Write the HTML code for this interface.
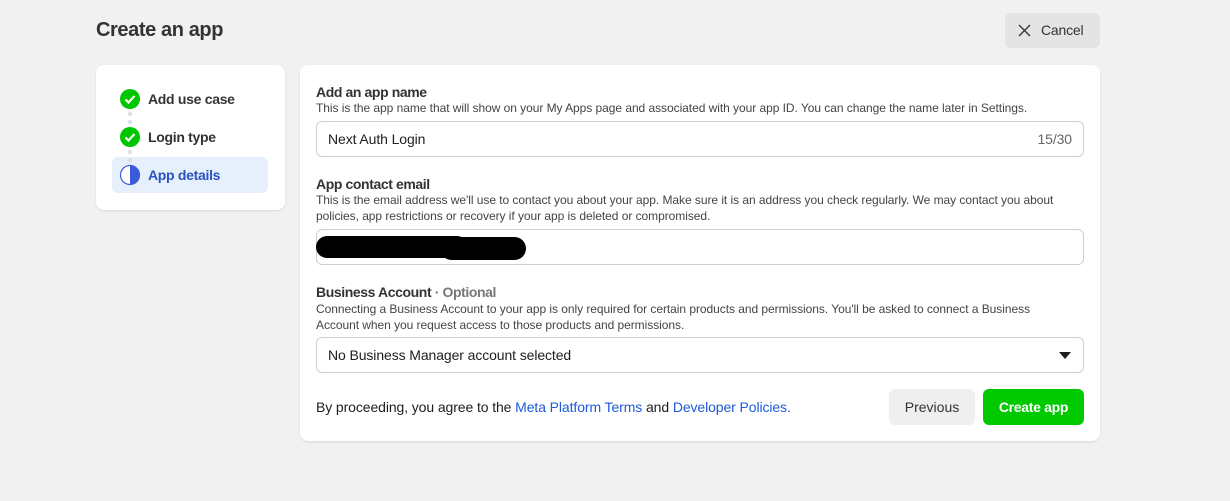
<!DOCTYPE html>
<html><head><style>
*{margin:0;padding:0;box-sizing:border-box}
body{width:1230px;height:501px;background:#f1f1f1;font-family:"Liberation Sans",Arial,sans-serif;color:#1c1e21;position:relative;overflow:hidden}
.a{position:absolute;white-space:nowrap}
.card{position:absolute;background:#fff;border-radius:8px;box-shadow:0 1px 2px rgba(0,0,0,.1)}
.h{font-size:14px;font-weight:bold;color:#333;letter-spacing:-0.4px}
.d{font-size:12px;color:#444;letter-spacing:-0.05px;line-height:16px}
.inp{position:absolute;left:316px;width:768px;height:36px;border:1px solid #ccd0d5;border-radius:6px;background:#fff}
.it{position:absolute;left:11px;top:9px;font-size:14px;color:#1c1e21;letter-spacing:-0.1px}
.chk{position:absolute;left:120px;width:20px;height:20px;border-radius:50%;background:#00c600}
.dot{position:absolute;left:128px;width:4px;height:4px;border-radius:50%;background:#dadde1}
.step{position:absolute;left:148px;font-size:14px;font-weight:bold;letter-spacing:-0.3px;color:#333}
</style></head><body>
<div class="a" style="left:96px;top:19px;font-size:20px;font-weight:bold;color:#333;letter-spacing:-0.4px">Create an app</div>
<div class="a" style="left:1005px;top:13px;width:95px;height:35px;background:#e4e4e4;border-radius:6px"></div>
<svg class="a" style="left:1018px;top:24px" width="13" height="13" viewBox="0 0 13 13"><path d="M1 1L12 12M12 1L1 12" stroke="#333" stroke-width="1.3"/></svg>
<div class="a" style="left:1041px;top:22px;font-size:14px;color:#333;letter-spacing:-0.2px">Cancel</div>

<div class="card" style="left:96px;top:65px;width:189px;height:145px"></div>
<div class="a" style="left:112px;top:157px;width:156px;height:36px;background:#e6f0fd;border-radius:6px"></div>
<div class="chk" style="top:89px"></div>
<svg class="a" style="left:120px;top:89px" width="20" height="20"><path d="M5.5 10.5l3 3 6-6.5" stroke="#fff" stroke-width="2.2" fill="none"/></svg>
<div class="step" style="top:91px">Add use case</div>
<div class="dot" style="top:112px"></div><div class="dot" style="top:120px"></div>
<div class="chk" style="top:127px"></div>
<svg class="a" style="left:120px;top:127px" width="20" height="20"><path d="M5.5 10.5l3 3 6-6.5" stroke="#fff" stroke-width="2.2" fill="none"/></svg>
<div class="step" style="top:129px">Login type</div>
<div class="dot" style="top:150px"></div><div class="dot" style="top:158px"></div>
<svg class="a" style="left:119px;top:164px" width="22" height="22"><circle cx="11" cy="11" r="9.5" fill="#fff" stroke="#3b5bdb" stroke-width="1.2"/><path d="M11 1.5A9.5 9.5 0 0 1 11 20.5Z" fill="#3b5bdb"/></svg>
<div class="step" style="top:167px;color:#2a52be">App details</div>

<div class="card" style="left:300px;top:65px;width:800px;height:376px"></div>
<div class="a h" style="left:316px;top:84px">Add an app name</div>
<div class="a d" style="left:316px;top:100px">This is the app name that will show on your My Apps page and associated with your app ID. You can change the name later in Settings.</div>
<div class="inp" style="top:121px"><div class="it">Next Auth Login</div><div class="it" style="left:auto;right:11px;color:#666">15/30</div></div>
<div class="a h" style="left:316px;top:176px">App contact email</div>
<div class="a d" style="left:316px;top:192px">This is the email address we'll use to contact you about your app. Make sure it is an address you check regularly. We may contact you about<br>policies, app restrictions or recovery if your app is deleted or compromised.</div>
<div class="inp" style="top:229px"></div>
<div class="a" style="left:316px;top:236px;width:152px;height:22px;background:#000;border-radius:11px"></div>
<div class="a" style="left:440px;top:237px;width:86px;height:23px;background:#000;border-radius:12px"></div>
<div class="a h" style="left:316px;top:284px">Business Account <span style="color:#777">· Optional</span></div>
<div class="a d" style="left:316px;top:301px">Connecting a Business Account to your app is only required for certain products and permissions. You'll be asked to connect a Business<br>Account when you request access to those products and permissions.</div>
<div class="inp" style="top:337px"><div class="it">No Business Manager account selected</div>
<svg class="a" style="left:742px;top:14px" width="12" height="7"><path d="M0 0h12L6 7z" fill="#1c1e21"/></svg></div>
<div class="a" style="left:316px;top:399px;font-size:14px;color:#1c1e21;letter-spacing:-0.1px">By proceeding, you agree to the <span style="color:#1d5bd8">Meta Platform Terms</span> and <span style="color:#1d5bd8">Developer Policies.</span></div>
<div class="a" style="left:889px;top:389px;width:86px;height:36px;background:#efefef;border-radius:6px;font-size:14px;color:#333;text-align:center;line-height:36px">Previous</div>
<div class="a" style="left:983px;top:389px;width:101px;height:36px;background:#00c900;border-radius:6px;font-size:14px;font-weight:bold;color:#fff;text-align:center;line-height:36px;letter-spacing:-0.3px">Create app</div>
</body></html>
